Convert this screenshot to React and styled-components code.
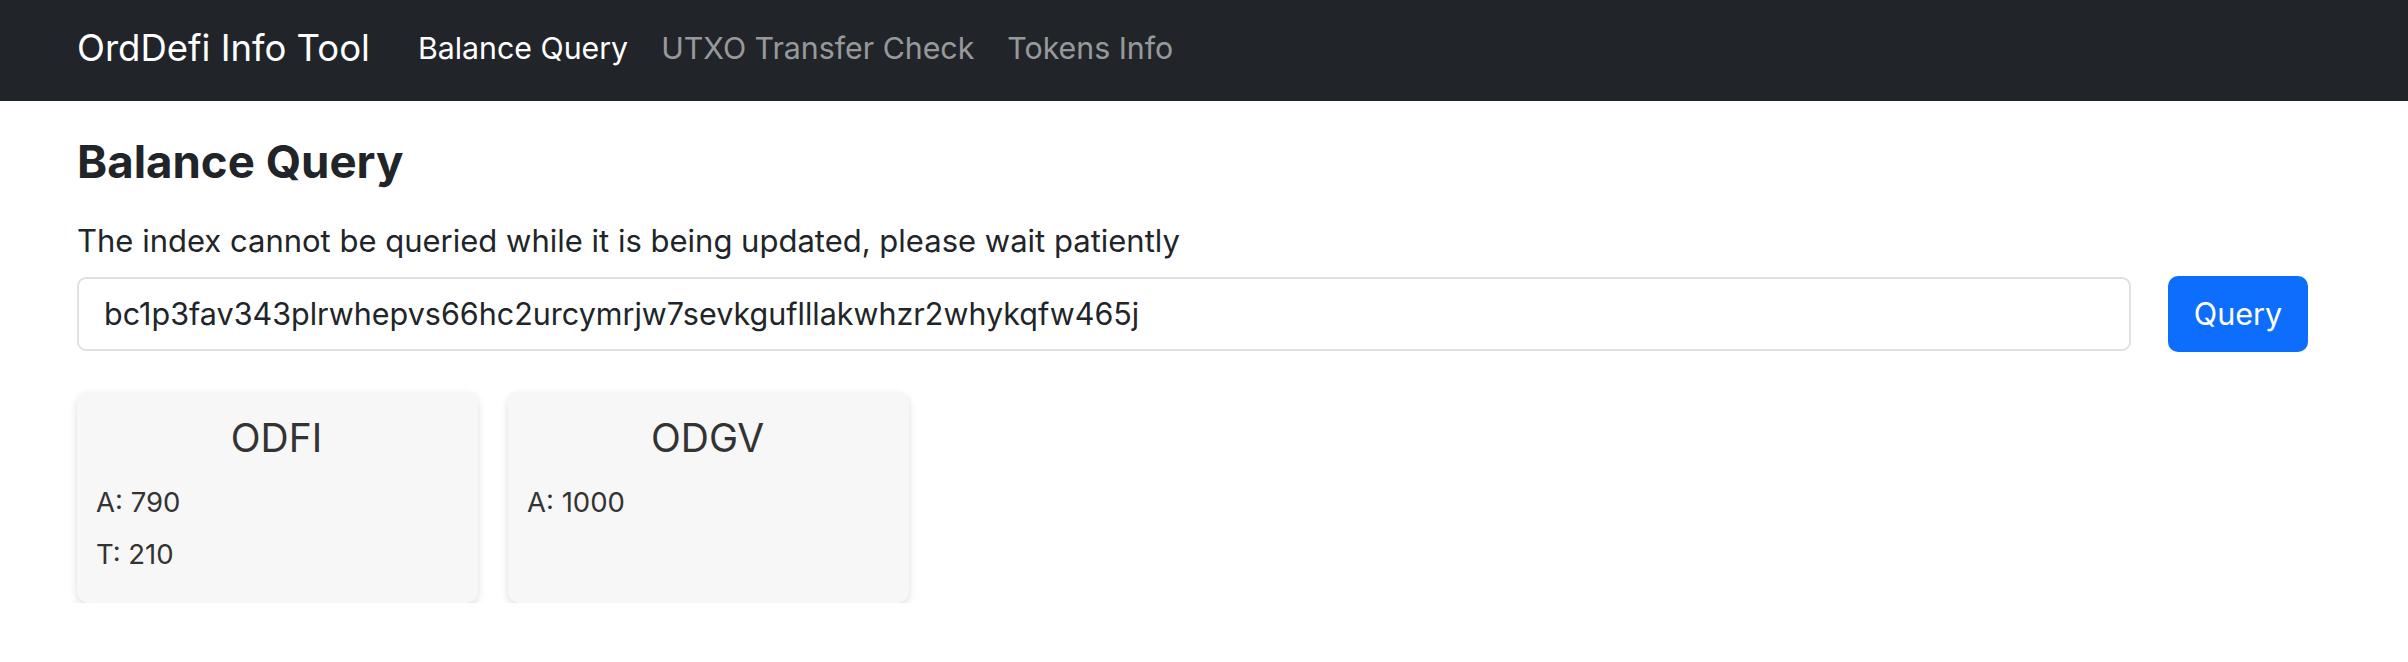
import React from 'react';
import styled, {createGlobalStyle} from "styled-components";

//CSS Starts
const GlobalStyle = createGlobalStyle`
  html, body {
    margin: 0;
    padding: 0;
    background: #fff;
    font-family: Inter, "Noto Sans", "Liberation Sans", sans-serif;
    color: #212529;
  }
`;
const StyledNavbar = styled.nav`
  height: 101px;
  background: #212529;
  display: flex;
  align-items: center;
  padding: 0 77px;
  box-sizing: border-box;
`;
const StyledBrand = styled.a`
  font-size: 36.5px;
  color: #fff;
  text-decoration: none;
  margin-right: 48px;
  margin-top: -6px;
`;
const StyledNavList = styled.div`
  display: flex;
  gap: 33px;
  margin-top: -6px;
`;
const StyledNavLink = styled.a`
  font-size: 30.3px;
  text-decoration: none;
  color: ${props => props.active ? '#fff' : 'rgba(255, 255, 255, 0.55)'};
`;
const StyledMain = styled.main`
  padding: 34px 100px 0 77px;
`;
const StyledH2 = styled.h2`
  margin: 0;
  font-size: 45.6px;
  font-weight: 700;
  line-height: 1.2;
`;
const StyledNote = styled.p`
  margin: 28px 0 11.5px;
  font-size: 31px;
  line-height: 1.5;
`;
const StyledForm = styled.form`
  display: flex;
  gap: 37px;
  align-items: center;
`;
const StyledInput = styled.input`
  flex: 1;
  height: 74px;
  box-sizing: border-box;
  border: 2px solid #dee2e6;
  border-radius: 9px;
  padding: 0 25px;
  font-family: inherit;
  font-size: 30.5px;
  color: #212529;
  outline: none;
`;
const StyledButton = styled.button`
  width: 140px;
  height: 76px;
  border: none;
  border-radius: 10px;
  background: #0d6efd;
  color: #fff;
  font-family: inherit;
  font-size: 30.6px;
`;
const StyledCards = styled.div`
  display: flex;
  gap: 30px;
  margin-top: 40px;
`;
const StyledCard = styled.div`
  width: 401px;
  height: 211px;
  box-sizing: border-box;
  background: #f7f7f7;
  border-radius: 12px;
  box-shadow: 0 3px 8px rgba(0, 0, 0, 0.14);
  padding: 23px 21px 0 19px;
  color: #333;
`;
const StyledCardTitle = styled.div`
  text-align: center;
  font-size: 39px;
  line-height: 1.2;
  margin-bottom: 14px;
`;
const StyledCardRow = styled.div`
  font-size: 27.5px;
  line-height: 52px;
`;
//CSS Ends

const tokens = [
    {name: 'ODFI', rows: ['A: 790', 'T: 210']},
    {name: 'ODGV', rows: ['A: 1000']},
];

const App = () => {
    return (
        <>
            <GlobalStyle/>
            <StyledNavbar>
                <StyledBrand href="#">OrdDefi Info Tool</StyledBrand>
                <StyledNavList>
                    <StyledNavLink href="#" active>Balance Query</StyledNavLink>
                    <StyledNavLink href="#">UTXO Transfer Check</StyledNavLink>
                    <StyledNavLink href="#">Tokens Info</StyledNavLink>
                </StyledNavList>
            </StyledNavbar>
            <StyledMain>
                <StyledH2>Balance Query</StyledH2>
                <StyledNote>The index cannot be queried while it is being updated, please wait patiently</StyledNote>
                <StyledForm onSubmit={e => e.preventDefault()}>
                    <StyledInput defaultValue="bc1p3fav343plrwhepvs66hc2urcymrjw7sevkguflllakwhzr2whykqfw465j"/>
                    <StyledButton type="submit">Query</StyledButton>
                </StyledForm>
                <StyledCards>
                    {tokens.map(token => (
                        <StyledCard key={token.name}>
                            <StyledCardTitle>{token.name}</StyledCardTitle>
                            {token.rows.map(row => <StyledCardRow key={row}>{row}</StyledCardRow>)}
                        </StyledCard>
                    ))}
                </StyledCards>
            </StyledMain>
        </>
    );
};

export default App;
